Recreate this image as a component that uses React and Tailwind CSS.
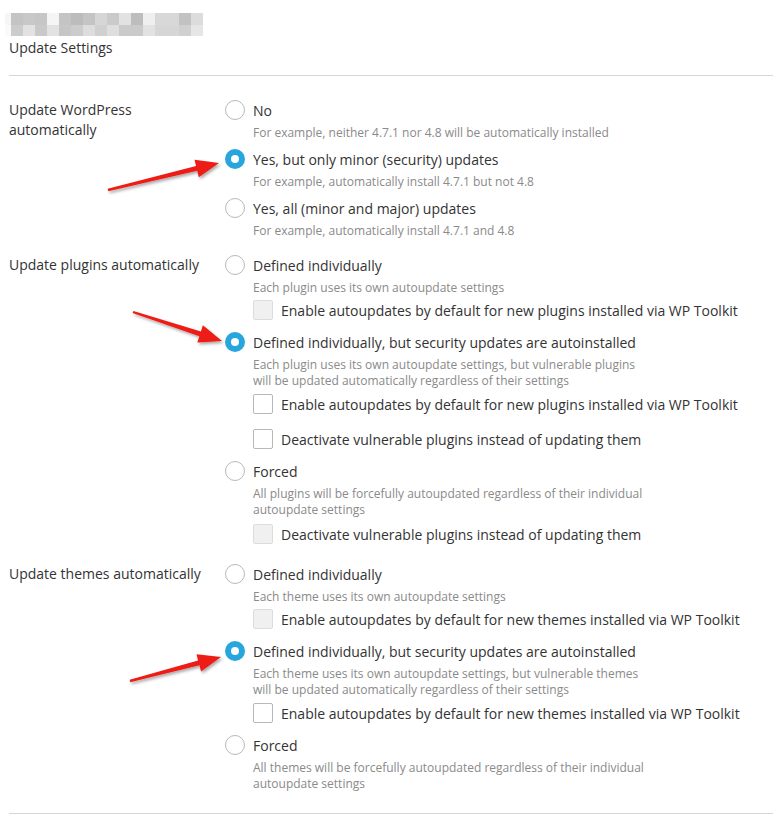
import React from 'react';

const mosaic = [
  ['#f6f6f6', '#c4c4c4', '#c8c8c8', '#c6c6c6', '#f5f5f5', '#c4c4c4', '#bcbcbc', '#c4c4c4', '#d6d6d6', '#cacaca', '#e2e2e2', '#bdbdbd', '#efefef', '#d8d8d8', '#d8d8d8', '#c2c2c2', '#dcdcdc'],
  ['#fafafa', '#cccccc', '#e2e2e2', '#c9c9c9', '#e2e2e2', '#c6c6c6', '#cccccc', '#dddddd', '#d0d0d0', '#dedede', '#cacaca', '#cacaca', '#e2e2e2', '#d6d6d6', '#d6d6d6', '#d0d0d0', '#e6e6e6'],
];

const Radio = ({ checked }) =>
  checked ? (
    <span className="flex h-5 w-5 shrink-0 items-center justify-center rounded-full bg-[#27a6de]">
      <span className="h-2 w-2 rounded-full bg-white" />
    </span>
  ) : (
    <span className="h-5 w-5 shrink-0 rounded-full border border-[#b8b8b8] bg-white" />
  );

const Checkbox = ({ label, disabled, className = 'mt-[2px]' }) => (
  <div className={`flex h-6 items-center gap-2 pl-7 ${className}`}>
    <span
      className={`h-5 w-5 shrink-0 rounded-[2px] border ${
        disabled ? 'border-[#dcdcdc] bg-[#f0f0f0]' : 'border-[#b8b8b8] bg-white'
      }`}
    />
    <span className="text-[14px] text-[#333]">{label}</span>
  </div>
);

const Option = ({ label, checked, hint, children, className = '' }) => (
  <div className={className}>
    <div className="flex h-6 items-center gap-2">
      <Radio checked={checked} />
      <span className="text-[14px] text-[#333]">{label}</span>
    </div>
    <div className="mt-[3px] pl-7 text-[12px] leading-4 text-[#8a8a8a]">
      {hint.map((line) => (
        <div key={line}>{line}</div>
      ))}
    </div>
    {children}
  </div>
);

const Section = ({ title, children, className = '' }) => (
  <div className={`flex ${className}`}>
    <div className="w-[216px] shrink-0 pr-4 pt-[2px] text-[14px] leading-5 text-[#333]">{title}</div>
    <div className="flex flex-col">{children}</div>
  </div>
);

// red callout arrow, tapered shaft plus head
const Arrow = ({ x1, y1, x2, y2 }) => {
  const dx = x2 - x1;
  const dy = y2 - y1;
  const len = Math.hypot(dx, dy);
  const ux = dx / len;
  const uy = dy / len;
  const nx = -uy;
  const ny = ux;
  const bx = x2 - ux * 23;
  const by = y2 - uy * 23;
  const p = (x, y) => `${x.toFixed(1)},${y.toFixed(1)}`;
  const pts = [
    p(x1 + nx * 1.2, y1 + ny * 1.2),
    p(bx + nx * 2.4, by + ny * 2.4),
    p(bx + nx * 9, by + ny * 9),
    p(x2, y2),
    p(bx - nx * 9, by - ny * 9),
    p(bx - nx * 2.4, by - ny * 2.4),
    p(x1 - nx * 1.2, y1 - ny * 1.2),
  ].join(' ');
  return <polygon points={pts} fill="#ee1c12" filter="url(#shadow)" />;
};

export default function App() {
  return (
    <div className="relative min-h-[815px] bg-white pl-[9px] font-['Open_Sans','Liberation_Sans',sans-serif]">
      <div className="-ml-[4px] pt-[13px]">
        {mosaic.map((row, i) => (
          <div key={i} className="flex h-[11.5px]">
            {row.map((c, j) => (
              <div key={j} className={j === 0 ? 'w-[6px]' : 'w-[12px]'} style={{ background: c }} />
            ))}
          </div>
        ))}
      </div>
      <div className="mt-[2px] pb-[17px] text-[14px] leading-5 text-[#333]">Update Settings</div>

      <div className="border-t border-[#d6d6d6] pt-[22px]">
        <Section title="Update WordPress automatically">
          <Option label="No" hint={['For example, neither 4.7.1 nor 4.8 will be automatically installed']} />
          <Option
            className="mt-[6px]"
            checked
            label="Yes, but only minor (security) updates"
            hint={['For example, automatically install 4.7.1 but not 4.8']}
          />
          <Option
            className="mt-[6px]"
            label="Yes, all (minor and major) updates"
            hint={['For example, automatically install 4.7.1 and 4.8']}
          />
        </Section>

        <Section title="Update plugins automatically" className="mt-[14px]">
          <Option label="Defined individually" hint={['Each plugin uses its own autoupdate settings']}>
            <Checkbox disabled label="Enable autoupdates by default for new plugins installed via WP Toolkit" />
          </Option>
          <Option
            className="mt-[8px]"
            checked
            label="Defined individually, but security updates are autoinstalled"
            hint={[
              'Each plugin uses its own autoupdate settings, but vulnerable plugins',
              'will be updated automatically regardless of their settings',
            ]}
          >
            <Checkbox className="mt-[3px]" label="Enable autoupdates by default for new plugins installed via WP Toolkit" />
            <Checkbox className="mt-[11px]" label="Deactivate vulnerable plugins instead of updating them" />
          </Option>
          <Option
            className="mt-[8px]"
            label="Forced"
            hint={[
              'All plugins will be forcefully autoupdated regardless of their individual',
              'autoupdate settings',
            ]}
          >
            <Checkbox disabled className="mt-[4px]" label="Deactivate vulnerable plugins instead of updating them" />
          </Option>
        </Section>

        <Section title="Update themes automatically" className="mt-[16px]">
          <Option label="Defined individually" hint={['Each theme uses its own autoupdate settings']}>
            <Checkbox disabled className="mt-[2px]" label="Enable autoupdates by default for new themes installed via WP Toolkit" />
          </Option>
          <Option
            className="mt-[8px]"
            checked
            label="Defined individually, but security updates are autoinstalled"
            hint={[
              'Each theme uses its own autoupdate settings, but vulnerable themes',
              'will be updated automatically regardless of their settings',
            ]}
          >
            <Checkbox className="mt-[3px]" label="Enable autoupdates by default for new themes installed via WP Toolkit" />
          </Option>
          <Option
            className="mt-[8px]"
            label="Forced"
            hint={[
              'All themes will be forcefully autoupdated regardless of their individual',
              'autoupdate settings',
            ]}
          />
        </Section>
      </div>

      <div className="mt-[21px] border-t border-[#d6d6d6]" />

      <svg className="pointer-events-none absolute left-0 top-0" width="773" height="815">
        <defs>
          <filter id="shadow" x="-20%" y="-50%" width="140%" height="200%">
            <feDropShadow dx="1.5" dy="2" stdDeviation="1.5" floodColor="#000" floodOpacity="0.35" />
          </filter>
        </defs>
        <Arrow x1={108} y1={190} x2={219} y2={163} />
        <Arrow x1={133} y1={312} x2={222} y2={341} />
        <Arrow x1={130} y1={681} x2={221} y2={657} />
      </svg>
    </div>
  );
}
